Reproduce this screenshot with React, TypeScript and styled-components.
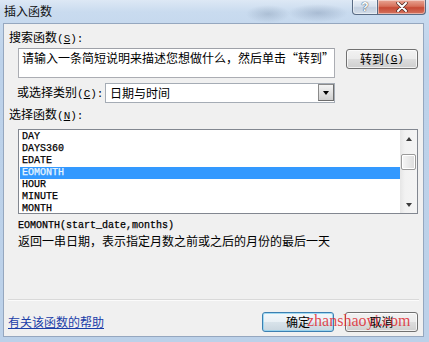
import React from "react";
import styled, { createGlobalStyle } from "styled-components";

const CJK = `"Noto Sans CJK SC", "Noto Sans", sans-serif`;
const MONO = `"Liberation Mono", "DejaVu Sans Mono", monospace`;

const Global = createGlobalStyle`
  html, body { margin: 0; padding: 0; background: #fff; }
  body { width: 429px; height: 342px; overflow: hidden; }
`;

const Window = styled.div`
  position: relative;
  width: 429px;
  height: 342px;
  box-sizing: border-box;
  display: flex;
  flex-direction: column;
  overflow: hidden;
  font-family: ${CJK};
  font-size: 12px;
  color: #000;
  background: linear-gradient(180deg, #dde8f5 0px, #c9dbef 12px, #bdd2ea 60px, #bcd1e9 100%);
`;

const TitleBar = styled.div`
  height: 23px;
  flex-shrink: 0;
  display: flex;
  align-items: flex-start;
  justify-content: space-between;
  background:
    radial-gradient(ellipse 22px 9px at 268px 14px, rgba(120, 140, 165, 0.35), transparent),
    radial-gradient(ellipse 30px 9px at 318px 13px, rgba(110, 130, 160, 0.35), transparent);
`;

const Title = styled.div`
  padding: 4px 0 0 4px;
  line-height: 14px;
  font-size: 12px;
  color: #111;
`;

const Caption = styled.div`
  display: flex;
  margin-right: 3px;
`;

const CapBtn = styled.div<{ $close?: boolean }>`
  box-sizing: border-box;
  width: ${(p) => (p.$close ? 48 : 26)}px;
  height: 15px;
  display: flex;
  align-items: center;
  justify-content: center;
  border: 1px solid #596b84;
  border-top: none;
  ${(p) => (p.$close ? "border-left: none;" : "")}
  border-radius: ${(p) => (p.$close ? "0 0 4px 0" : "0 0 0 4px")};
  background: ${(p) =>
    p.$close
      ? "linear-gradient(180deg, #e8a695 0%, #d7705a 45%, #c74a35 55%, #d4735f 100%)"
      : "linear-gradient(180deg, #e9eff7 0%, #d6e0ec 45%, #c3d0e0 55%, #d3dde9 100%)"};
  box-shadow: inset 0 0 0 1px rgba(255, 255, 255, 0.45);
  color: #fff;
  font-family: "Liberation Sans", sans-serif;
  font-weight: bold;
  font-size: 12px;
  line-height: 12px;
`;

const HelpGlyph = styled.span`
  color: #fff;
  font-size: 12px;
  text-shadow: 0 0 1px #33445a, 0 0 1px #33445a;
`;

const Content = styled.div`
  flex: 1;
  margin: 0 5px 5px 3px;
  border: 1px solid #95a7bf;
  background: #f0f0f0;
  display: flex;
  flex-direction: column;
`;

const Label = styled.div<{ $indent: number; $top: number }>`
  margin: ${(p) => p.$top}px 0 0 ${(p) => p.$indent}px;
  height: 14px;
  line-height: 14px;
  white-space: nowrap;
`;

const Mn = styled.span`
  font-family: ${MONO};
  font-size: 11px;
`;

const MnKey = styled.span`
  text-decoration: underline;
`;

const SearchRow = styled.div`
  margin-top: 4px;
  padding-left: 14px;
  display: flex;
  align-items: flex-start;
  gap: 11px;
`;

const TextBox = styled.div`
  box-sizing: border-box;
  width: 317px;
  height: 30px;
  background: #fff;
  border: 1px solid #abadb3;
  border-top-color: #9ea1a8;
  padding: 2px 0 0 3px;
  line-height: 14px;
  white-space: nowrap;
`;

const Button = styled.div<{ $w: number; $def?: boolean; $top?: number }>`
  box-sizing: border-box;
  width: ${(p) => p.$w}px;
  height: 20px;
  margin-top: ${(p) => p.$top ?? 0}px;
  display: flex;
  align-items: center;
  justify-content: center;
  border: 1px solid ${(p) => (p.$def ? "#3c7fb1" : "#707070")};
  border-radius: 3px;
  background: ${(p) =>
    p.$def
      ? "linear-gradient(180deg, #f4f8fb 0%, #e9f0f5 48%, #d8e3ea 52%, #c9d6df 100%)"
      : "linear-gradient(180deg, #f2f2f2 0%, #ebebeb 48%, #dddddd 52%, #cfcfcf 100%)"};
  box-shadow: inset 0 0 0 1px ${(p) => (p.$def ? "rgba(140,210,240,0.8)" : "rgba(255,255,255,0.7)")};
  line-height: 14px;
  white-space: nowrap;
`;

const CategoryRow = styled.div`
  margin-top: 5px;
  padding-left: 13px;
  height: 20px;
  display: flex;
  align-items: center;
`;

const CatLabel = styled.div`
  width: 88px;
  flex-shrink: 0;
  line-height: 14px;
  white-space: nowrap;
`;

const Select = styled.div`
  box-sizing: border-box;
  width: 230px;
  height: 20px;
  border: 1px solid #a5acb5;
  background: #fff;
  display: flex;
  align-items: stretch;
`;

const SelectText = styled.div`
  flex: 1;
  padding-left: 4px;
  line-height: 18px;
`;

const DropBtn = styled.div`
  box-sizing: border-box;
  width: 16px;
  margin: 0 0 1px 0;
  border: 1px solid #8a8a8a;
  border-right-color: #6d6d6d;
  border-bottom-color: #6d6d6d;
  background: linear-gradient(180deg, #f4f4f4 0%, #e2e2e2 50%, #cfcfcf 100%);
  display: flex;
  align-items: center;
  justify-content: center;
`;

const Tri = styled.div<{ $up?: boolean; $color?: string; $w?: number }>`
  width: 0;
  height: 0;
  border-left: ${(p) => (p.$w ?? 7) / 2}px solid transparent;
  border-right: ${(p) => (p.$w ?? 7) / 2}px solid transparent;
  ${(p) =>
    p.$up
      ? `border-bottom: 4px solid ${p.$color ?? "#000"};`
      : `border-top: 4px solid ${p.$color ?? "#000"};`}
`;

const ListBox = styled.div`
  box-sizing: border-box;
  margin: 8px 0 0 14px;
  width: 400px;
  height: 85px;
  border: 1px solid #828790;
  background: #fff;
  display: flex;
`;

const Items = styled.div`
  flex: 1;
  padding: 1px 0 0 1px;
  overflow: hidden;
`;

const Item = styled.div<{ $sel?: boolean }>`
  height: 12px;
  line-height: 12px;
  padding-left: 2px;
  font-family: ${MONO};
  font-size: 10px;
  color: ${(p) => (p.$sel ? "#eaf6ff" : "#000")};
  background: ${(p) => (p.$sel ? "#3399ff" : "transparent")};
  -webkit-text-stroke: 0.25px ${(p) => (p.$sel ? "#eaf6ff" : "#000")};
`;

const ScrollBar = styled.div`
  width: 17px;
  flex-shrink: 0;
  background: linear-gradient(90deg, #e6e6e6 0%, #f2f2f2 30%, #f4f4f4 100%);
  display: flex;
  flex-direction: column;
  align-items: center;
`;

const ArrowCell = styled.div`
  height: 17px;
  width: 17px;
  display: flex;
  align-items: center;
  justify-content: center;
`;

const Thumb = styled.div`
  box-sizing: border-box;
  margin-top: 7px;
  width: 15px;
  height: 16px;
  border: 1px solid #9a9a9a;
  border-radius: 2px;
  background: linear-gradient(90deg, #f6f6f6 0%, #e9e9e9 50%, #dcdcdc 100%);
  box-shadow: inset 0 0 0 1px #fff;
`;

const Track = styled.div`
  flex: 1;
`;

const Syntax = styled.div`
  margin: 6px 0 0 14px;
  height: 12px;
  line-height: 12px;
  font-family: ${MONO};
  font-size: 10px;
  color: #000;
  -webkit-text-stroke: 0.25px #000;
`;

const Desc = styled.div`
  margin: 2px 0 0 14px;
  height: 14px;
  line-height: 14px;
  white-space: nowrap;
`;

const Spacer = styled.div`
  flex: 1;
`;

const Separator = styled.div`
  height: 1px;
  margin: 0 4px 0 4px;
  background: #d9d9d9;
  border-bottom: 1px solid #fbfbfb;
`;

const BottomRow = styled.div`
  margin-top: 11px;
  padding: 0 5px 5px 4px;
  height: 19px;
  display: flex;
  align-items: center;
  gap: 11px;
`;

const HelpLink = styled.a`
  flex: 1;
  color: #1a3da8;
  text-decoration: underline;
  line-height: 14px;
  cursor: pointer;
`;

const Watermark = styled.div`
  position: absolute;
  left: 307px;
  top: 312px;
  font-family: "Liberation Serif", serif;
  font-size: 16px;
  line-height: 18px;
  color: rgba(222, 40, 48, 0.85);
  pointer-events: none;
  white-space: nowrap;
`;

const items = ["DAY", "DAYS360", "EDATE", "EOMONTH", "HOUR", "MINUTE", "MONTH"];

function Mnemonic({ k, tail = "" }: { k: string; tail?: string }) {
  return (
    <Mn>
      (<MnKey>{k}</MnKey>){tail}
    </Mn>
  );
}

export default function App() {
  return (
    <>
      <Global />
      <Window>
        <TitleBar>
          <Title>插入函数</Title>
          <Caption>
            <CapBtn>
              <HelpGlyph>?</HelpGlyph>
            </CapBtn>
            <CapBtn $close>
              <svg width="14" height="10" viewBox="0 0 14 10">
                <path
                  d="M3 1 L11 9 M11 1 L3 9"
                  stroke="#4b2a24"
                  strokeWidth="3.4"
                  strokeLinecap="round"
                />
                <path
                  d="M3 1 L11 9 M11 1 L3 9"
                  stroke="#ffffff"
                  strokeWidth="2"
                  strokeLinecap="round"
                />
              </svg>
            </CapBtn>
          </Caption>
        </TitleBar>
        <Content>
          <Label $indent={5} $top={6}>
            搜索函数<Mnemonic k="S" tail=":" />
          </Label>
          <SearchRow>
            <TextBox>请输入一条简短说明来描述您想做什么，然后单击“转到”</TextBox>
            <Button $w={72} $top={1}>
              转到<Mnemonic k="G" />
            </Button>
          </SearchRow>
          <CategoryRow>
            <CatLabel>
              或选择类别<Mnemonic k="C" tail=":" />
            </CatLabel>
            <Select>
              <SelectText>日期与时间</SelectText>
              <DropBtn>
                <Tri $w={7} />
              </DropBtn>
            </Select>
          </CategoryRow>
          <Label $indent={5} $top={4}>
            选择函数<Mnemonic k="N" tail=":" />
          </Label>
          <ListBox>
            <Items>
              {items.map((it) => (
                <Item key={it} $sel={it === "EOMONTH"}>
                  {it}
                </Item>
              ))}
            </Items>
            <ScrollBar>
              <ArrowCell>
                <Tri $up $w={7} $color="#3c3c3c" />
              </ArrowCell>
              <Thumb />
              <Track />
              <ArrowCell>
                <Tri $w={7} $color="#3c3c3c" />
              </ArrowCell>
            </ScrollBar>
          </ListBox>
          <Syntax>EOMONTH(start_date,months)</Syntax>
          <Desc>返回一串日期，表示指定月数之前或之后的月份的最后一天</Desc>
          <Spacer />
          <Separator />
          <BottomRow>
            <HelpLink>有关该函数的帮助</HelpLink>
            <Button $w={72} $def>
              确定
            </Button>
            <Button $w={73}>取消</Button>
          </BottomRow>
        </Content>
        <Watermark>zhanshaoyi.com</Watermark>
      </Window>
    </>
  );
}
